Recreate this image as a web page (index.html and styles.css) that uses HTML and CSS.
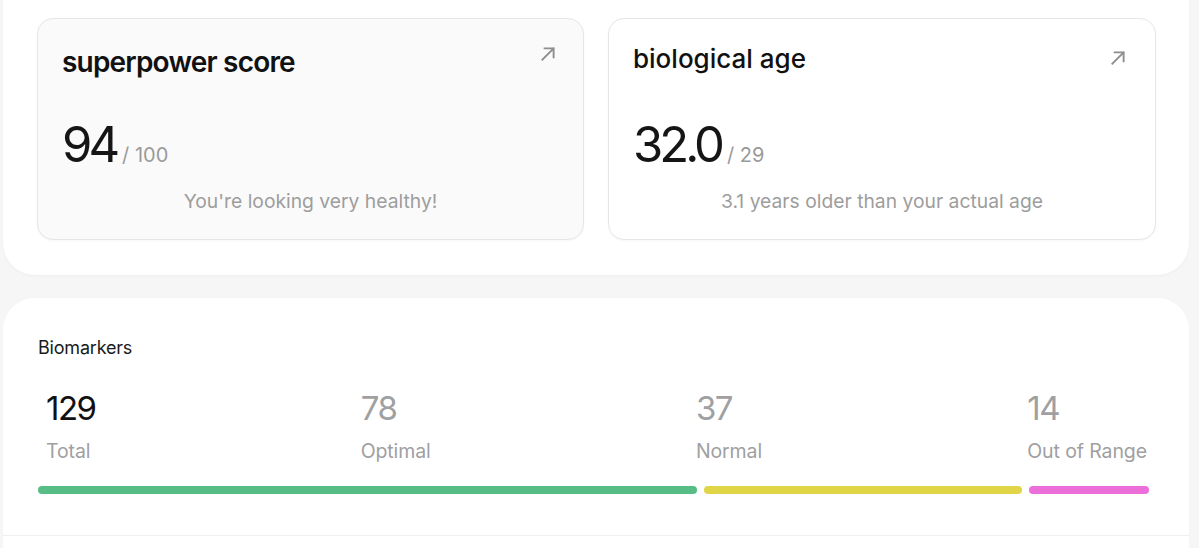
FILE: index.html
```html
<!DOCTYPE html>
<html>
<head>
<meta charset="utf-8">
<link rel="stylesheet" href="styles.css">
</head>
<body>
<div class="page">
  <section class="top-panel">
    <div class="card card-muted">
      <div class="card-head">
        <h2 class="title title-score">superpower score</h2>
        <svg class="arrow" viewBox="0 0 16 16" width="18" height="18"><path d="M3 13L13 3M5 3h8v8" fill="none" stroke="#8e8e8e" stroke-width="1.7" stroke-linecap="square"/></svg>
      </div>
      <div class="value"><span class="big">94</span><span class="of">/ 100</span></div>
      <p class="note">You're looking very healthy!</p>
    </div>
    <div class="card">
      <div class="card-head">
        <h2 class="title title-age">biological age</h2>
        <svg class="arrow arrow-low" viewBox="0 0 16 16" width="18" height="18"><path d="M3 13L13 3M5 3h8v8" fill="none" stroke="#8e8e8e" stroke-width="1.7" stroke-linecap="square"/></svg>
      </div>
      <div class="value"><span class="big">32.0</span><span class="of">/ 29</span></div>
      <p class="note">3.1 years older than your actual age</p>
    </div>
  </section>

  <section class="bio-panel">
    <h3 class="bio-title">Biomarkers</h3>
    <div class="stats">
      <div class="stat"><div class="num num-dark">129</div><div class="label">Total</div></div>
      <div class="stat"><div class="num">78</div><div class="label">Optimal</div></div>
      <div class="stat"><div class="num">37</div><div class="label">Normal</div></div>
      <div class="stat"><div class="num">14</div><div class="label">Out of Range</div></div>
    </div>
    <div class="bars">
      <div class="bar bar-green" style="flex: 659"></div>
      <div class="bar bar-yellow" style="flex: 318"></div>
      <div class="bar bar-pink" style="flex: 120"></div>
    </div>
    <div class="divider"></div>
  </section>
</div>
</body>
</html>
```

FILE: styles.css
```css
* { box-sizing: border-box; }
html, body { margin: 0; padding: 0; }
body {
  background: #f6f6f6;
  font-family: Inter, "Noto Sans", sans-serif;
  color: #111;
  width: 1199px;
  height: 548px;
  overflow: hidden;
}
.page {
  padding-left: 3px;
  width: 1189px;
  display: flex;
  flex-direction: column;
  gap: 23px;
}
.top-panel {
  background: #fff;
  border-radius: 0 0 32px 32px;
  box-shadow: 0 1px 3px rgba(0,0,0,0.04);
  display: grid;
  grid-template-columns: 547px 548px;
  gap: 24px;
  padding: 18px 30px 35px 34px;
}
.card {
  background: #fff;
  border: 1px solid #e6e6e6;
  border-radius: 16px;
  height: 222px;
  padding: 0 24px 0 24px;
  display: flex;
  flex-direction: column;
  box-shadow: 0 1px 2px rgba(0,0,0,0.03);
}
.card-muted { background: #fafafa; }
.card-head {
  display: flex;
  justify-content: space-between;
  align-items: flex-start;
  height: 70px;
  padding-top: 24px;
}
.title {
  margin: 0;
  font-size: 26px;
  line-height: 32px;
  color: #111;
}
.title-score { font-size: 28px; font-weight: 600; letter-spacing: -0.8px; padding-top: 3px; }
.title-age { font-weight: 500; letter-spacing: 0; }
.arrow { margin-top: 2px; margin-right: 2px; }
.arrow-low { margin-top: 6px; margin-right: 4px; }
.value {
  margin-top: 32px;
  display: flex;
  align-items: baseline;
  gap: 6px;
}
.big {
  font-size: 49px;
  line-height: 48px;
  letter-spacing: -4px;
  color: #151515;
}
.of {
  font-size: 20px;
  color: #9a9a9a;
  letter-spacing: 0;
}
.note {
  margin: 20px 0 0 0;
  text-align: center;
  font-size: 19.3px;
  color: #9d9d9d;
  letter-spacing: 0;
}
.bio-panel {
  background: #fff;
  border-radius: 32px 32px 0 0;
  padding: 38px 40px 0 35px;
  height: 260px;
}
.bio-title {
  margin: 0;
  font-size: 18px;
  font-weight: 400;
  line-height: 24px;
  color: #1a1a1a;
  letter-spacing: -0.2px;
}
.stats {
  display: flex;
  justify-content: space-between;
  padding: 0 2px 0 8px;
  margin-top: 28px;
}
.num {
  font-size: 33px;
  line-height: 40px;
  color: #a0a0a2;
  letter-spacing: -1.5px;
}
.num-dark { color: #111; }
.label {
  margin-top: 11px;
  font-size: 19.5px;
  line-height: 24px;
  color: #a0a0a2;
  letter-spacing: -0.1px;
}
.bars {
  display: flex;
  gap: 7px;
  margin-top: 23px;
}
.bar { height: 8px; border-radius: 4px; }
.bar-green { background: #58bd85; }
.bar-yellow { background: #e0d546; }
.bar-pink { background: #ec6fd9; }
.divider {
  margin: 41px -40px 0 -35px;
  border-top: 1px solid #f0f0f0;
}
```
